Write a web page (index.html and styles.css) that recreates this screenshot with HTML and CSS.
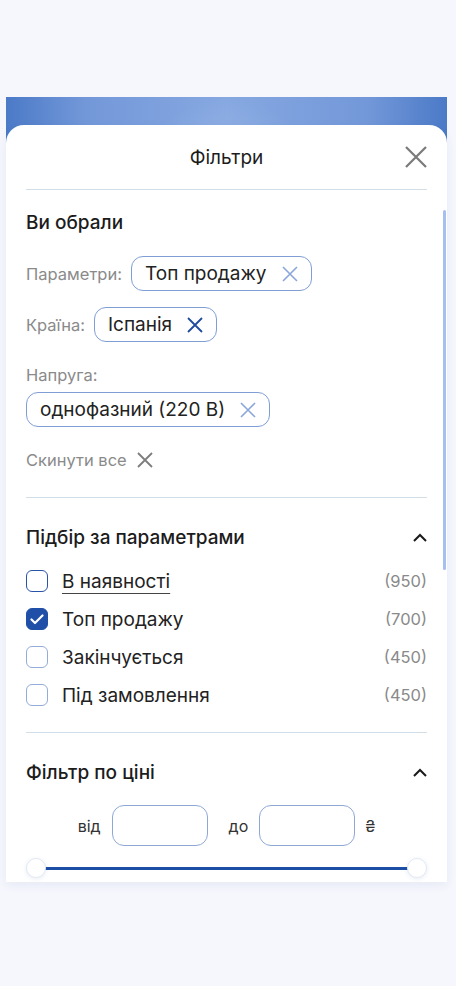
FILE: index.html
```html
<!DOCTYPE html>
<html lang="uk">
<head>
    <meta charset="UTF-8">
    <meta name="viewport" content="width=device-width, initial-scale=1.0">
    <title>Фільтри</title>
    <link rel="stylesheet" href="styles.css">
</head>
<body>

    <div class="screen">
        <div class="sheet">
            <div class="panel">
                <header class="panel-head">
                    <span></span>
                    <h1 class="panel-title">Фільтри</h1>
                    <button class="close-btn" type="button">
                        <svg width="22" height="22" viewBox="0 0 22 22"><path d="M1 1 L21 21 M21 1 L1 21" stroke="#7a7a7a" stroke-width="2.2" fill="none"/></svg>
                    </button>
                </header>

                <div class="panel-body">
                    <!-- обрані фільтри -->
                    <section class="block">
                        <h2 class="block-title">Ви обрали</h2>

                        <div class="chosen-row">
                            <span class="chosen-label">Параметри:</span>
                            <span class="chip">Топ продажу
                                <svg class="chip-x" width="16" height="16" viewBox="0 0 16 16"><path d="M1 1 L15 15 M15 1 L1 15" stroke="#8aa6da" stroke-width="1.6" fill="none"/></svg>
                            </span>
                        </div>

                        <div class="chosen-row">
                            <span class="chosen-label">Країна:</span>
                            <span class="chip">Іспанія
                                <svg class="chip-x" width="16" height="16" viewBox="0 0 16 16"><path d="M1 1 L15 15 M15 1 L1 15" stroke="#1e4b9f" stroke-width="1.8" fill="none"/></svg>
                            </span>
                        </div>

                        <div class="chosen-row stacked">
                            <span class="chosen-label">Напруга:</span>
                            <span class="chip">однофазний (220 В)
                                <svg class="chip-x" width="16" height="16" viewBox="0 0 16 16"><path d="M1 1 L15 15 M15 1 L1 15" stroke="#8aa6da" stroke-width="1.6" fill="none"/></svg>
                            </span>
                        </div>

                        <button class="reset-btn" type="button">Скинути все
                            <svg width="16" height="16" viewBox="0 0 16 16"><path d="M1 1 L15 15 M15 1 L1 15" stroke="#7d7d7d" stroke-width="1.8" fill="none"/></svg>
                        </button>
                    </section>

                    <!-- підбір за параметрами -->
                    <section class="block">
                        <div class="block-head">
                            <h2 class="block-title">Підбір за параметрами</h2>
                            <svg class="chevron" width="14" height="9" viewBox="0 0 14 9"><polyline points="1,8 7,2 13,8" stroke="#1a1a1a" stroke-width="2" fill="none"/></svg>
                        </div>
                        <ul class="check-list">
                            <li class="check-row">
                                <span class="box hover"></span>
                                <span class="check-name underlined">В наявності</span>
                                <span class="count">(950)</span>
                            </li>
                            <li class="check-row">
                                <span class="box checked">
                                    <svg width="14" height="11" viewBox="0 0 14 11"><polyline points="1.5,5.5 5,9 12.5,1.5" stroke="#fff" stroke-width="2.2" fill="none" stroke-linecap="round" stroke-linejoin="round"/></svg>
                                </span>
                                <span class="check-name">Топ продажу</span>
                                <span class="count">(700)</span>
                            </li>
                            <li class="check-row">
                                <span class="box"></span>
                                <span class="check-name">Закінчується</span>
                                <span class="count">(450)</span>
                            </li>
                            <li class="check-row">
                                <span class="box"></span>
                                <span class="check-name">Під замовлення</span>
                                <span class="count">(450)</span>
                            </li>
                        </ul>
                    </section>

                    <!-- фільтр по ціні -->
                    <section class="block last">
                        <div class="block-head">
                            <h2 class="block-title">Фільтр по ціні</h2>
                            <svg class="chevron" width="14" height="9" viewBox="0 0 14 9"><polyline points="1,8 7,2 13,8" stroke="#1a1a1a" stroke-width="2" fill="none"/></svg>
                        </div>
                        <div class="price-row">
                            <span class="price-label">від</span>
                            <input type="text" class="price-input">
                            <span class="price-label to">до</span>
                            <input type="text" class="price-input">
                            <span class="currency">₴</span>
                        </div>
                        <div class="range">
                            <span class="range-track"></span>
                            <span class="range-thumb"></span>
                            <span class="range-thumb"></span>
                        </div>
                    </section>
                </div>

                <div class="scrollbar"></div>
            </div>
        </div>
    </div>

</body>
</html>
```

FILE: styles.css
```css
body {
    margin: 0;
    padding: 0;
    background-color: #f6f7fd;
    font-family: Inter, "Noto Sans", sans-serif;
    color: #1c1c1c;
}

.screen {
    width: 456px;
    height: 986px;
    padding-top: 97px;
    box-sizing: border-box;
}

/* синя смужка з білим відблиском над панеллю */
.sheet {
    margin: 0 9px 0 6px;
    padding-top: 28px;
    background:
        radial-gradient(ellipse 56% 100% at 50% 100%, #ffffff 0%, rgba(255, 255, 255, 0.9) 40%, rgba(255, 255, 255, 0) 100%),
        linear-gradient(90deg, #4b7ac7 0%, #7398d9 18%, #86a8e1 50%, #7398d9 82%, #4b7ac7 100%);
}

.panel {
    position: relative;
    height: 757px;
    overflow: hidden;
    background-color: white;
    border-radius: 18px 18px 0 0;
    box-shadow: 0 3px 10px rgba(40, 70, 140, 0.08);
}

.panel-head {
    display: grid;
    grid-template-columns: 1fr auto 1fr;
    align-items: center;
    height: 64px;
    margin: 0 20px;
    border-bottom: 1px solid #d2dfe9;
}

.panel-title {
    margin: 0;
    font-size: 19px;
    font-weight: 400;
}

.close-btn {
    justify-self: end;
    padding: 0;
    border: none;
    background: none;
    line-height: 0;
    cursor: pointer;
}

.panel-body {
    padding: 0 20px;
}

.block {
    padding: 21px 0 27px;
    border-bottom: 1px solid #d2dfe9;
}

.block + .block {
    padding-top: 28px;
    padding-bottom: 18px;
}

.block.last {
    border-bottom: none;
    padding-bottom: 0;
}

.block-title {
    margin: 0;
    font-size: 19px;
    line-height: 24px;
    font-weight: 500;
}

.block-head {
    display: flex;
    justify-content: space-between;
    align-items: center;
}

.chevron {
    margin-top: -2px;
}

/* обрані фільтри */
.chosen-row {
    display: flex;
    align-items: center;
    gap: 9px;
    margin-top: 16px;
}

.block-title + .chosen-row {
    margin-top: 21px;
}

.chosen-row.stacked {
    flex-direction: column;
    align-items: flex-start;
    gap: 0;
}

.chosen-row.stacked .chosen-label {
    line-height: 34px;
}

.chosen-label {
    font-size: 16.5px;
    color: #8a8a8a;
}

.chip {
    display: inline-flex;
    align-items: center;
    gap: 15px;
    height: 35px;
    padding: 0 13px;
    box-sizing: border-box;
    border: 1px solid #7f9ed5;
    border-radius: 12px;
    font-size: 19px;
    color: #222;
}

.reset-btn {
    display: inline-flex;
    align-items: center;
    gap: 10px;
    margin-top: 23px;
    padding: 0;
    border: none;
    background: none;
    font-family: inherit;
    font-size: 16.5px;
    line-height: 20px;
    color: #8a8a8a;
    cursor: pointer;
}

/* чекбокси */
.check-list {
    list-style: none;
    margin: 12px 0 0;
    padding: 0;
}

.check-row {
    display: flex;
    align-items: center;
    height: 38px;
}

.box {
    display: flex;
    justify-content: center;
    align-items: center;
    width: 22px;
    height: 22px;
    box-sizing: border-box;
    border: 1.5px solid #93acd9;
    border-radius: 6px;
    margin-right: 14px;
}

.box.hover {
    border-color: #2953a6;
}

.box.checked {
    border-color: #1f4fa6;
    background-color: #1f4fa6;
}

.check-name {
    flex: 1;
    font-size: 19px;
    color: #222;
}

.check-name.underlined {
    flex: none;
    margin-right: auto;
    text-decoration: underline;
    text-decoration-color: #444;
    text-underline-offset: 5px;
}

.count {
    font-size: 16.5px;
    color: #8a8a8a;
}

/* ціна */
.price-row {
    display: flex;
    justify-content: center;
    align-items: center;
    margin-top: 20px;
}

.price-label {
    font-size: 16px;
    color: #333;
    margin-right: 11px;
}

.price-label.to {
    margin-left: 21px;
}

.price-input {
    width: 96px;
    height: 41px;
    box-sizing: border-box;
    border: 1px solid #8ea8d6;
    border-radius: 12px;
    background: white;
}

.currency {
    margin-left: 10px;
    font-size: 16px;
    color: #333;
}

.range {
    position: relative;
    display: flex;
    justify-content: space-between;
    margin-top: 12px;
}

.range-track {
    position: absolute;
    left: 10px;
    right: 10px;
    top: 9px;
    height: 3px;
    background-color: #1d4ea5;
}

.range-thumb {
    position: relative;
    width: 20px;
    height: 20px;
    box-sizing: border-box;
    border: 1px solid #e3e9f4;
    border-radius: 50%;
    background-color: white;
    box-shadow: 0 1px 4px rgba(60, 90, 160, 0.12);
}

.scrollbar {
    position: absolute;
    top: 85px;
    right: 1px;
    width: 3px;
    height: 360px;
    border-radius: 2px;
    background-color: #a7bfee;
}
```
